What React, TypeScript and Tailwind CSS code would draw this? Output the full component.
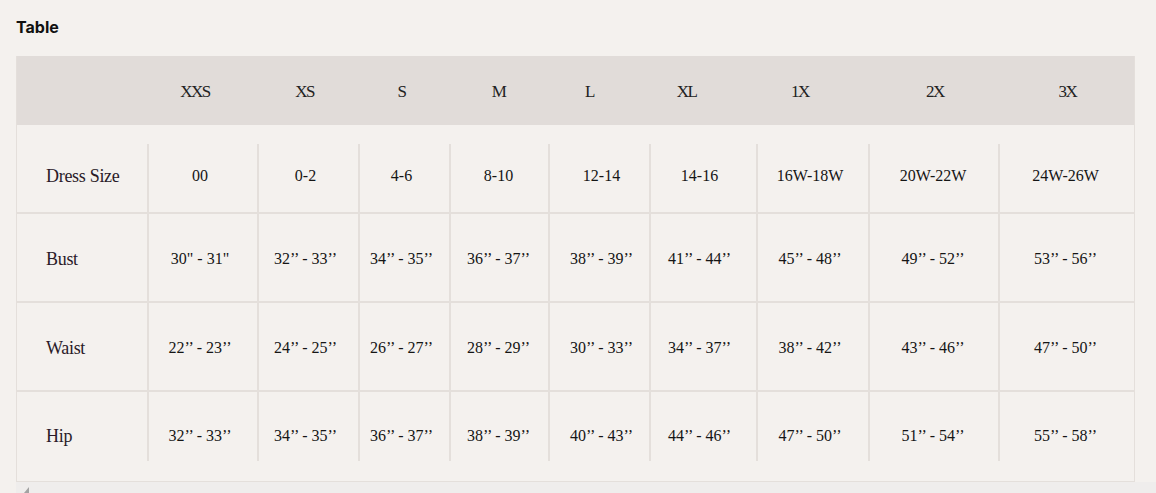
const SIZES = ["XXS", "XS", "S", "M", "L", "XL", "1X", "2X", "3X"];

// widths of the body columns (label column first)
const COLS = ["w-[130px]", "w-[110px]", "w-[101px]", "w-[91px]", "w-[99px]", "w-[101px]", "w-[107px]", "w-[112px]", "w-[130px]", "w-[137px]"];

// header labels sit a little off the body column centres
const HEAD_SHIFT = ["pr-[14px]", "pr-[6px]", "pr-[4px]", "", "pr-[18px]", "pr-[32px]", "pr-[24px]", "pl-[4px]", "pl-[2px]"];

// and so do the values, by a few pixels
const VALUE_SHIFT = ["pr-[6px]", "pr-[6px]", "pr-[6px]", "pr-[2px]", "pl-[4px]", "pr-[8px]", "pr-[6px]", "pr-[2px]", "pr-[4px]"];

const ROWS = [
  { label: "Dress Size", values: ["00", "0-2", "4-6", "8-10", "12-14", "14-16", "16W-18W", "20W-22W", "24W-26W"] },
  { label: "Bust", values: ["30\" - 31\"", "32’’ - 33’’", "34’’ - 35’’", "36’’ - 37’’", "38’’ - 39’’", "41’’ - 44’’", "45’’ - 48’’", "49’’ - 52’’", "53’’ - 56’’"] },
  { label: "Waist", values: ["22’’ - 23’’", "24’’ - 25’’", "26’’ - 27’’", "28’’ - 29’’", "30’’ - 33’’", "34’’ - 37’’", "38’’ - 42’’", "43’’ - 46’’", "47’’ - 50’’"] },
  { label: "Hip", values: ["32’’ - 33’’", "34’’ - 35’’", "36’’ - 37’’", "38’’ - 39’’", "40’’ - 43’’", "44’’ - 46’’", "47’’ - 50’’", "51’’ - 54’’", "55’’ - 58’’"] },
];

function BodyRow({ row, index }: { row: (typeof ROWS)[number]; index: number }) {
  const first = index === 0;
  const last = index === ROWS.length - 1;
  const labelPad = first ? "pt-[16px]" : last ? "" : "pt-[3px]";
  const valuePad = first ? "pb-[5px]" : last ? "pt-[18px]" : "pt-[3px]";
  return (
    <div className={`flex h-[89px] ${last ? "" : "border-b-2 border-[#e4dfdb]"}`}>
      <div className={`${COLS[0]} shrink-0 flex items-center pl-[29px] ${labelPad} font-['Liberation_Serif',serif] text-[18px] text-[#2a1a28] tracking-[-0.3px]`}>
        {row.label}
      </div>
      {row.values.map((v, i) => (
        <div key={i} className={`${COLS[i + 1]} shrink-0 flex flex-col ${first ? "pt-[19px]" : ""} ${last ? "pb-[20px]" : ""}`}>
          <div className={`flex-1 border-l-2 border-[#e4dfdb] flex items-center justify-center ${valuePad} ${VALUE_SHIFT[i]} font-['Liberation_Serif',serif] text-[16px] text-[#151515]`}>
            {v}
          </div>
        </div>
      ))}
    </div>
  );
}

export default function App() {
  return (
    <div className="w-[1156px] h-[493px] overflow-hidden bg-[#f4f1ee] relative">
      <h2 className="pl-4 pt-[17px] h-[56px] font-['Inter',sans-serif] font-bold text-[16px] text-[#111] leading-[20px]">Table</h2>
      <div className="ml-4 w-[1119px] border border-[#e4dfdb] border-t-0">
        <div className="flex h-[69px] bg-[#e1dcd9]">
          <div className={`${COLS[0]} shrink-0`} />
          {SIZES.map((s, i) => (
            <div key={s} className={`${COLS[i + 1]} ${HEAD_SHIFT[i]} shrink-0 flex items-center justify-center pt-[2px] font-['Liberation_Serif',serif] text-[17px] text-[#222] tracking-[-1.5px]`}>
              {s}
            </div>
          ))}
        </div>
        {ROWS.map((r, i) => (
          <BodyRow key={r.label} row={r} index={i} />
        ))}
      </div>
      <div className="absolute left-4 right-0 bottom-0 h-[11px] bg-[#efedec]">
        <svg className="absolute left-[8px] top-[5px]" width="6" height="6" viewBox="0 0 6 6">
          <polygon points="5,0 5,6 0,6" fill="#a3a3a3" />
        </svg>
      </div>
    </div>
  );
}
